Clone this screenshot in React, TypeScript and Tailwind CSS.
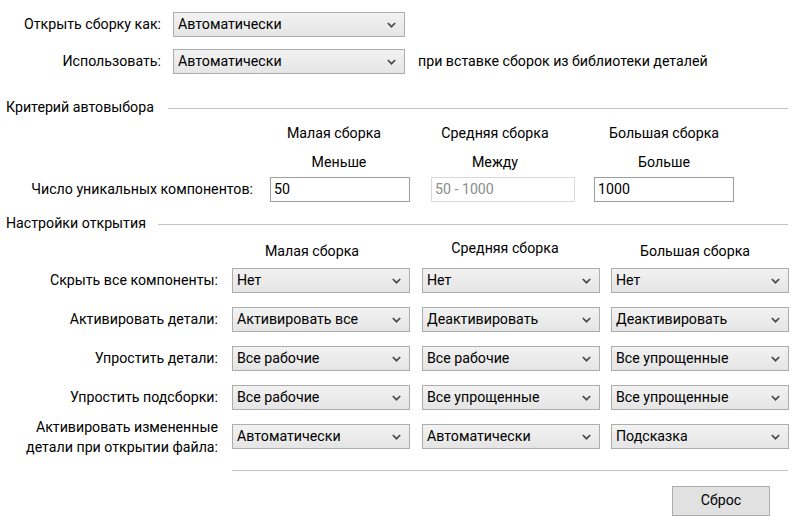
import React from "react";

function Chevron() {
  return (
    <svg width="9" height="6" viewBox="0 0 9 6" className="shrink-0">
      <path d="M0.8 1 L4.5 4.7 L8.2 1" fill="none" stroke="#4a4a4a" strokeWidth="1.7" />
    </svg>
  );
}

function Select({ value, w }: { value: string; w: string }) {
  return (
    <div
      className={`${w} h-[25px] shrink-0 flex items-center justify-between pl-[4px] pr-[8px] border border-[#adadad] bg-gradient-to-b from-[#f2f2f2] to-[#e5e5e5] text-[#000]`}
    >
      <span className="whitespace-nowrap">{value}</span>
      <Chevron />
    </div>
  );
}

function SectionHeader({ title, lineGap }: { title: string; lineGap: string }) {
  return (
    <div className="flex items-center h-[20px] pl-[6px]">
      <span className="whitespace-nowrap">{title}</span>
      <div className={`flex-1 h-px bg-[#c4c4c4] ${lineGap} mr-[12px]`} />
    </div>
  );
}

function GridRow({ label, values, twoLine }: { label: React.ReactNode; values: string[]; twoLine?: boolean }) {
  return (
    <div className="flex items-center h-[25px]">
      <div className={`w-[232px] shrink-0 pr-[14px] text-right ${twoLine ? "leading-[20px]" : ""}`}>{label}</div>
      <Select value={values[0]} w="w-[178px]" />
      <div className="w-[12px] shrink-0" />
      <Select value={values[1]} w="w-[178px]" />
      <div className="w-[11px] shrink-0" />
      <Select value={values[2]} w="w-[178px]" />
    </div>
  );
}

export default function App() {
  return (
    <div
      className="w-[800px] h-[522px] bg-white text-[14.2px] text-[#000] overflow-hidden"
      style={{ fontFamily: "Roboto, 'Liberation Sans', sans-serif" }}
    >
      <div className="pt-[12px]">
        <div className="flex items-center h-[25px]">
          <div className="w-[173px] shrink-0 pr-[12px] text-right">Открыть сборку как:</div>
          <Select value="Автоматически" w="w-[232px]" />
        </div>
        <div className="flex items-center h-[25px] mt-[12px]">
          <div className="w-[173px] shrink-0 pr-[12px] text-right">Использовать:</div>
          <Select value="Автоматически" w="w-[232px]" />
          <span className="ml-[13px] whitespace-nowrap">при вставке сборок из библиотеки деталей</span>
        </div>

        <div className="mt-[24px]">
          <SectionHeader title="Критерий автовыбора" lineGap="ml-[14px]" />
        </div>

        <div className="flex items-center h-[20px] mt-[6px]">
          <div className="w-[270px] shrink-0" />
          <div className="w-[140px] shrink-0 pr-[12px] text-center whitespace-nowrap">Малая сборка</div>
          <div className="w-[21px] shrink-0" />
          <div className="w-[144px] shrink-0 pr-[16px] text-center whitespace-nowrap">Средняя сборка</div>
          <div className="w-[19px] shrink-0" />
          <div className="w-[140px] shrink-0 text-center whitespace-nowrap">Большая сборка</div>
        </div>
        <div className="flex items-center h-[20px] mt-[9px]">
          <div className="w-[270px] shrink-0" />
          <div className="w-[140px] shrink-0 pr-[2px] text-center">Меньше</div>
          <div className="w-[21px] shrink-0" />
          <div className="w-[144px] shrink-0 pr-[16px] text-center">Между</div>
          <div className="w-[19px] shrink-0" />
          <div className="w-[140px] shrink-0 text-center">Больше</div>
        </div>
        <div className="flex items-center h-[25px] mt-[4px]">
          <div className="w-[270px] shrink-0 pr-[17px] text-right whitespace-nowrap">Число уникальных компонентов:</div>
          <div className="w-[140px] h-[25px] shrink-0 flex items-center pl-[3px] border border-[#9e9e9e] bg-white">50</div>
          <div className="w-[21px] shrink-0" />
          <div className="w-[144px] h-[25px] shrink-0 flex items-center pl-[3px] border border-[#d9d9d9] bg-white text-[#8c8c8c]">50 - 1000</div>
          <div className="w-[19px] shrink-0" />
          <div className="w-[140px] h-[25px] shrink-0 flex items-center pl-[3px] border border-[#9e9e9e] bg-white">1000</div>
        </div>

        <div className="mt-[12px]">
          <SectionHeader title="Настройки открытия" lineGap="ml-[12px]" />
        </div>

        <div className="flex items-center h-[20px] mt-[8px]">
          <div className="w-[232px] shrink-0" />
          <div className="w-[178px] shrink-0 pr-[18px] text-center whitespace-nowrap">Малая сборка</div>
          <div className="w-[12px] shrink-0" />
          <div className="w-[178px] shrink-0 pr-[12px] mb-[6px] text-center whitespace-nowrap">Средняя сборка</div>
          <div className="w-[11px] shrink-0" />
          <div className="w-[178px] shrink-0 pr-[10px] text-center whitespace-nowrap">Большая сборка</div>
        </div>

        <div className="mt-[6px] flex flex-col gap-[14px]">
          <GridRow label="Скрыть все компоненты:" values={["Нет", "Нет", "Нет"]} />
          <GridRow label="Активировать детали:" values={["Активировать все", "Деактивировать", "Деактивировать"]} />
          <GridRow label="Упростить детали:" values={["Все рабочие", "Все рабочие", "Все упрощенные"]} />
          <GridRow label="Упростить подсборки:" values={["Все рабочие", "Все упрощенные", "Все упрощенные"]} />
          <GridRow
            twoLine
            label={
              <>
                Активировать измененные
                <br />
                детали при открытии файла:
              </>
            }
            values={["Автоматически", "Автоматически", "Подсказка"]}
          />
        </div>

        <div className="mt-[21px] ml-[232px] w-[556px] h-[2px] border-t border-[#c4c4c4] border-b-white" />

        <div className="mt-[14px] ml-[672px] w-[98px] h-[30px] flex items-center justify-center border border-[#adadad] bg-[#e1e1e1]">
          Сброс
        </div>
      </div>
    </div>
  );
}
